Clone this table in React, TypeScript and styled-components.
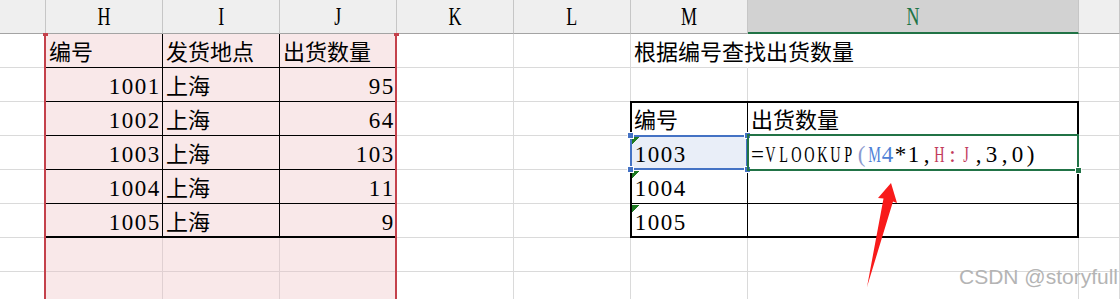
import {type FC, type ReactNode} from "react";
import styled, {createGlobalStyle} from "styled-components";

const GRID_LINE = "#dadada";
const TINT = "#f9e8e9";
const TINT_LINE = "#e0d0d2";
const RANGE_RED = "#c4414b";
const EDIT_GREEN = "#217346";
const REF_BLUE = "#4472c4";

const COLUMNS = ["", "H", "I", "J", "K", "L", "M", "N", ""];
const ACTIVE_COLUMN = 7;
const ROW_COUNT = 8;

type CellData = {
    content?: ReactNode;
    align?: "left" | "right";
    tint?: boolean;
    lined?: boolean;
    heavyBottom?: boolean;
    noRight?: boolean;
    bg?: string;
    flag?: boolean;
};

const shipments = [
    {id: "1001", place: "上海", qty: "95"},
    {id: "1002", place: "上海", qty: "64"},
    {id: "1003", place: "上海", qty: "103"},
    {id: "1004", place: "上海", qty: "11"},
    {id: "1005", place: "上海", qty: "9"},
];

// fixed advance for half-width characters, like the sheet font does
const Mono: FC<{ text: string; color?: string }> = ({text, color}) => (
    <>
        {[...text].map((ch, i) => (
            <Glyph key={i} $color={color}>
                {/[A-Z]/.test(ch) ? <Capital>{ch}</Capital> : ch}
            </Glyph>
        ))}
    </>
);

const buildSheet = (): CellData[][] => {
    const rows: CellData[][] = Array.from({length: ROW_COUNT}, () => COLUMNS.map(() => ({})));

    // H:J list, whole columns selected
    for (let r = 0; r < ROW_COUNT; r++) {
        for (let c = 1; c <= 3; c++) {
            rows[r][c] = {tint: true, lined: r < 6, heavyBottom: r === 5};
        }
    }
    rows[0][1].content = "编号";
    rows[0][2].content = "发货地点";
    rows[0][3].content = "出货数量";
    shipments.forEach((s, i) => {
        rows[i + 1][1] = {...rows[i + 1][1], content: <Mono text={s.id}/>, align: "right"};
        rows[i + 1][2] = {...rows[i + 1][2], content: s.place};
        rows[i + 1][3] = {...rows[i + 1][3], content: <Mono text={s.qty}/>, align: "right"};
    });

    // lookup block in M:N
    rows[0][6] = {content: "根据编号查找出货数量", noRight: true};
    for (let r = 2; r <= 5; r++) {
        rows[r][6] = {lined: true};
        rows[r][7] = {lined: true};
    }
    rows[2][6].content = "编号";
    rows[2][7].content = "出货数量";
    rows[3][6] = {...rows[3][6], content: <Mono text="1003"/>, bg: "#e9eef8", flag: true};
    rows[3][7].content = (
        <>
            <Mono text="=VLOOKUP"/>
            <Mono text="(" color="#8c9bd0"/>
            <Mono text="M4" color="#4d80d6"/>
            <Mono text="*1,"/>
            <Mono text="H:J" color="#c23a5c"/>
            <Mono text=",3,0)"/>
        </>
    );
    rows[4][6] = {...rows[4][6], content: <Mono text="1004"/>, flag: true};
    rows[5][6] = {...rows[5][6], content: <Mono text="1005"/>, flag: true};

    return rows;
};

const App: FC = () => {
    const sheet = buildSheet();

    return (
        <>
            <GlobalStyle/>
            <Sheet>
                {COLUMNS.map((name, c) => (
                    <HeaderCell key={`h${c}`} $col={c + 1} $active={c === ACTIVE_COLUMN}>
                        <HeaderLetter>{name}</HeaderLetter>
                    </HeaderCell>
                ))}

                {sheet.map((row, r) =>
                    row.map((cell, c) => (
                        <Cell key={`${r}-${c}`}
                              $row={r + 2}
                              $col={c + 1}
                              $align={cell.align}
                              $tint={cell.tint}
                              $lined={cell.lined}
                              $heavy={cell.heavyBottom}
                              $noRight={cell.noRight}
                              $bg={cell.bg}
                              $flag={cell.flag}
                        >
                            {cell.content}
                        </Cell>
                    ))
                )}

                <RangeMarker $area="2 / 2 / 10 / 5"/>
                <TableFrame $area="4 / 7 / 8 / 9"/>

                <RefBox $area="5 / 7 / 6 / 8">
                    <Handle $h="left" $v="top" $color={REF_BLUE}/>
                    <Handle $h="right" $v="top" $color={REF_BLUE}/>
                    <Handle $h="left" $v="bottom" $color={REF_BLUE}/>
                    <Handle $h="right" $v="bottom" $color={REF_BLUE}/>
                </RefBox>

                <EditBox $area="5 / 8 / 6 / 9">
                    <Handle $h="right" $v="bottom" $color={EDIT_GREEN}/>
                </EditBox>

                <Pointer viewBox="0 0 42 112">
                    <polygon points="31,5 37,25 33,23.5 7,109 23.5,20.5 18,20" fill="#f81b1b"/>
                </Pointer>

                <Watermark>CSDN @storyfull</Watermark>
            </Sheet>
        </>
    );
};

export default App;

const GlobalStyle = createGlobalStyle`
    html, body {
        margin: 0;
        padding: 0;
        background: #fff;
        overflow: hidden;
    }
`;

const Sheet = styled.div`
    position: relative;

    display: grid;
    grid-template-columns: 46px repeat(6, 117px) 331px 1fr;
    grid-template-rows: repeat(9, 34px);

    width: 1120px;
    height: 299px;
    overflow: hidden;

    background: #fff;

    font-family: "Liberation Serif", "Noto Sans CJK SC", serif;
    color: #000;
`;

const HeaderCell = styled.div<{ $col: number; $active?: boolean }>`
    grid-row: 1;
    grid-column: ${p => p.$col};

    box-sizing: border-box;
    padding-top: 2px;

    text-align: center;

    background: ${p => p.$active ? "#d2d2d2" : "#efefef"};
    border-right: 1px solid #c6c6c6;
    border-bottom: ${p => p.$active ? `2px solid ${EDIT_GREEN}` : "1px solid #a4a4a4"};

    color: ${p => p.$active ? EDIT_GREEN : "#000"};
    font-size: 25px;
    line-height: 30px;
`;

const HeaderLetter = styled.span`
    display: inline-block;
    transform: scaleX(0.72);
`;

type CellProps = {
    $row: number;
    $col: number;
    $align?: "left" | "right";
    $tint?: boolean;
    $lined?: boolean;
    $heavy?: boolean;
    $noRight?: boolean;
    $bg?: string;
    $flag?: boolean;
};

const lineColor = (p: CellProps) => p.$lined ? "#000" : p.$tint ? TINT_LINE : GRID_LINE;

const cellBackground = (p: CellProps) => {
    const fill = p.$bg ?? (p.$tint ? TINT : "transparent");
    if (!p.$flag) return fill;
    return `linear-gradient(135deg, #1d7a22 50%, transparent 50%) 1px 1px / 8px 8px no-repeat, ${fill}`;
};

const Cell = styled.div<CellProps>`
    grid-row: ${p => p.$row};
    grid-column: ${p => p.$col};

    box-sizing: border-box;
    min-width: 0;
    padding: 5px 2px 0 3px;

    text-align: ${p => p.$align ?? "left"};
    white-space: nowrap;

    font-size: 22px;
    line-height: 28px;

    background: ${cellBackground};
    border-right: 1px solid ${p => p.$noRight ? "transparent" : lineColor(p)};
    border-bottom: ${p => p.$heavy ? 2 : 1}px solid ${lineColor};
`;

const Glyph = styled.span<{ $color?: string }>`
    display: inline-block;
    width: 13px;

    text-align: center;

    font-size: 23px;
    color: ${p => p.$color ?? "#000"};
`;

// capitals of the sheet font are tall and condensed
const Capital = styled.span`
    display: inline-block;

    font-size: 15px;
    line-height: 15px;

    transform: scale(0.95, 1.53);
    transform-origin: 50% 84%;
`;

const Overlay = styled.div<{ $area: string }>`
    grid-area: ${p => p.$area};
    position: relative;
    pointer-events: none;
`;

const RangeMarker = styled(Overlay)`
    margin: -1px 0 0 -2px;

    border-left: 2px solid ${RANGE_RED};
    border-right: 2px solid ${RANGE_RED};

    &::before, &::after {
        content: "";
        position: absolute;
        top: 0;
        width: 5px;
        height: 3px;
        background: ${RANGE_RED};
    }

    &::before {
        left: -3px;
    }

    &::after {
        right: -4px;
    }
`;

const TableFrame = styled(Overlay)`
    margin: -1px 0 0 -1px;
    border: 2px solid #000;
`;

const RefBox = styled(Overlay)`
    margin: -1px 0 0 -1px;
    border: 2px solid ${REF_BLUE};
`;

const EditBox = styled(Overlay)`
    margin: -2px 0 -1px -1px;
    border: 2px solid ${EDIT_GREEN};
`;

const Handle = styled.span<{ $h: "left" | "right"; $v: "top" | "bottom"; $color: string }>`
    position: absolute;
    ${p => p.$h}: -5px;
    ${p => p.$v}: -5px;

    width: 7px;
    height: 7px;
    box-sizing: border-box;

    border: 1px solid #fff;
    background: ${p => p.$color};
`;

const Pointer = styled.svg`
    position: absolute;
    left: 860px;
    top: 178px;

    width: 42px;
    height: 112px;

    pointer-events: none;
`;

const Watermark = styled.div`
    position: absolute;
    left: 959px;
    top: 265px;

    font-family: "Liberation Sans", Arial, sans-serif;
    font-size: 21px;
    line-height: 24px;

    color: #b4b4b4;
    white-space: nowrap;

    pointer-events: none;
`;
